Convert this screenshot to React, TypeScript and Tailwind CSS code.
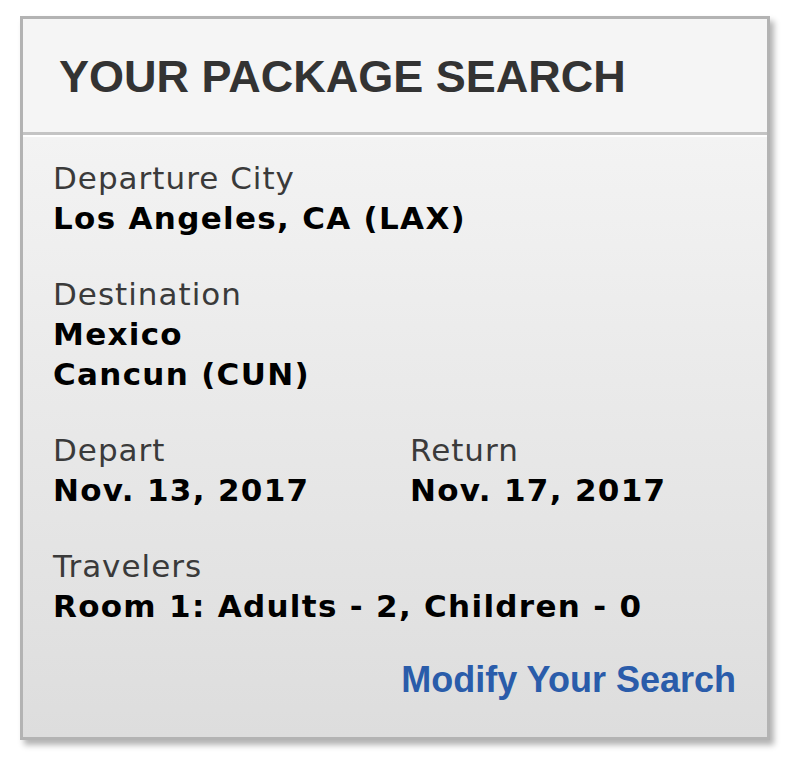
export default function App() {
  return (
    <div className="min-h-[770px] w-[788px] bg-white pl-[20px] pt-[16px]">
      <div className="flex h-[724px] w-[750px] flex-col border-[3px] border-[#b3b3b3] shadow-[4px_5px_6px_rgba(0,0,0,0.3)]">
        {/* Header */}
        <div className="flex h-[113px] items-center bg-[#f5f5f5] pl-[36px] pt-[2px]">
          <h1 className="font-['Liberation_Sans',Arial,sans-serif] text-[45px] font-bold leading-none text-[#333333]">
            YOUR PACKAGE SEARCH
          </h1>
        </div>
        <div className="h-[3px] bg-[#c4c4c4]" />
        <div className="h-[2px] bg-white" />

        {/* Details */}
        <div className="flex flex-1 flex-col bg-gradient-to-b from-[#f3f3f3] to-[#dddddd] pl-[30px] pr-[31px] pt-[21px] font-['DejaVu_Sans',Verdana,sans-serif] text-[31px] leading-[40px] tracking-[1px]">
          <div>
            <p className="text-[#3a3a3a]">Departure City</p>
            <p className="font-bold tracking-[1.3px] text-black">Los Angeles, CA (LAX)</p>
          </div>

          <div className="mt-[36px]">
            <p className="text-[#3a3a3a]">Destination</p>
            <p className="font-bold tracking-[1.3px] text-black">Mexico</p>
            <p className="font-bold tracking-[1.3px] text-black">Cancun (CUN)</p>
          </div>

          <div className="mt-[36px] grid grid-cols-[357px_1fr]">
            <div>
              <p className="text-[#3a3a3a]">Depart</p>
              <p className="font-bold tracking-[1.3px] text-black">Nov. 13, 2017</p>
            </div>
            <div>
              <p className="text-[#3a3a3a]">Return</p>
              <p className="font-bold tracking-[1.3px] text-black">Nov. 17, 2017</p>
            </div>
          </div>

          <div className="mt-[36px]">
            <p className="text-[#3a3a3a]">Travelers</p>
            <p className="font-bold tracking-[1.3px] text-black">Room 1: Adults - 2, Children - 0</p>
          </div>

          <div className="mt-[34px] flex justify-end">
            <a className="font-['Liberation_Sans',Arial,sans-serif] text-[36px] font-bold leading-[40px] tracking-normal text-[#2a5caa]">
              Modify Your Search
            </a>
          </div>
        </div>
      </div>
    </div>
  )
}
